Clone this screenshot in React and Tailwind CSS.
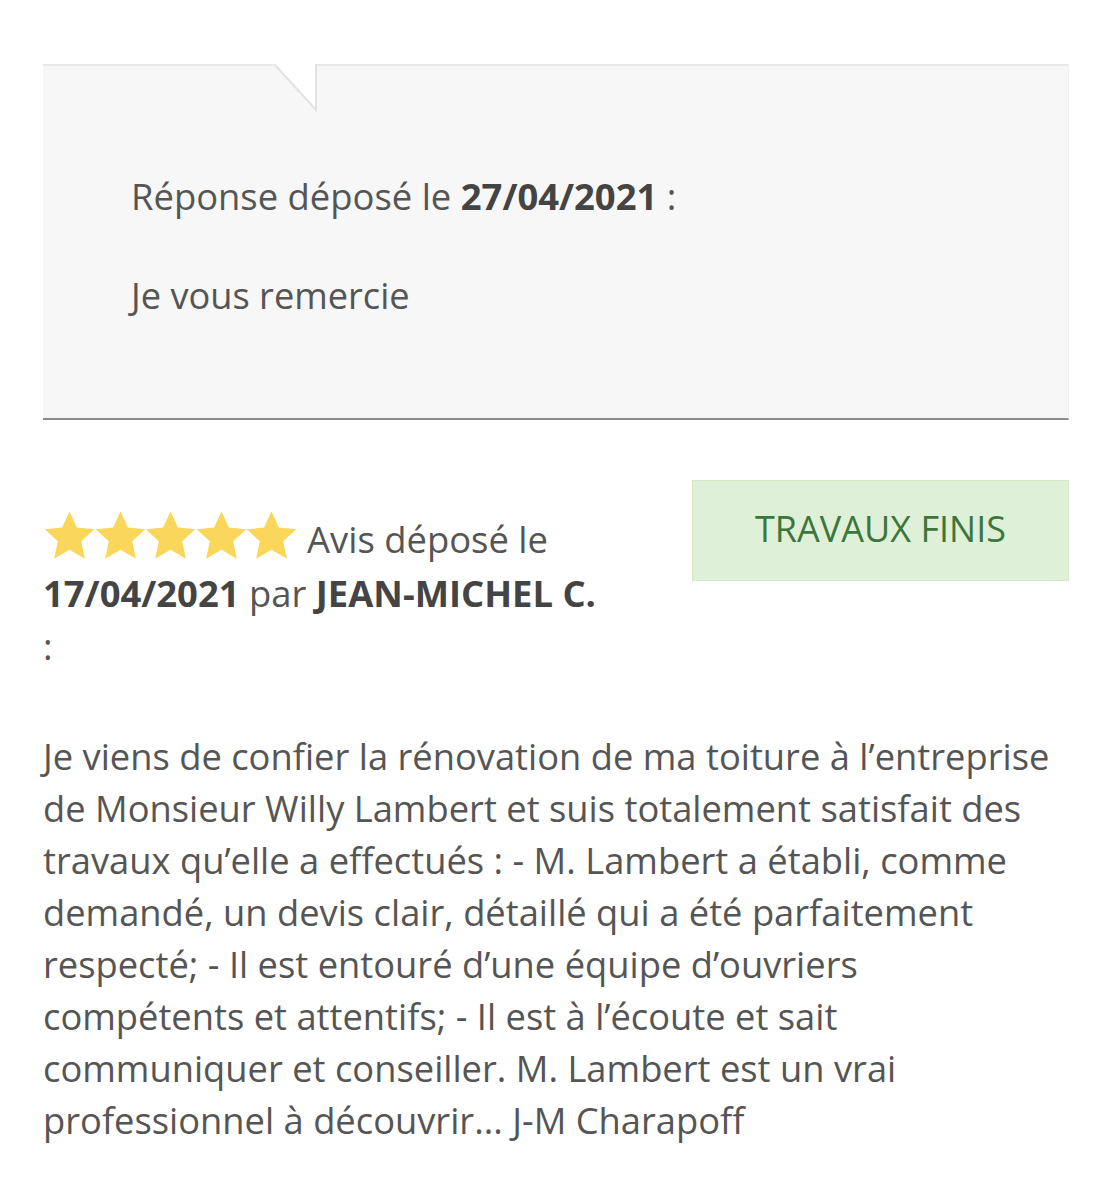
import React from "react";

function Star() {
  return (
    <svg width="51" height="48" viewBox="1.1 1.1 21.8 20.9" className="block -mr-[0.4px]">
      <path
        d="M12 1.2l3.2 7.1 7.6.8-5.7 5.2 1.6 7.6L12 18l-6.7 3.9 1.6-7.6L1.2 9.1l7.6-.8z"
        fill="#fad75a"
      />
    </svg>
  );
}

export default function App() {
  return (
    <div
      className="bg-white min-h-[1200px] px-[43px] pt-[64px] text-[#555]"
      style={{ fontFamily: '"Open Sans", "Noto Sans", sans-serif' }}
    >
      <div className="relative bg-[#f7f7f7] border-t-2 border-t-[#e8e8e8] border-b-2 border-b-[#8c8c8c] border-r border-r-[#f0f0f0] h-[356px] pl-[88px] pt-[104px]">
        <svg
          className="absolute left-[232px] top-[-2px]"
          width="46"
          height="50"
          viewBox="0 0 46 50"
        >
          <polygon points="0,0 42,0 42,46" fill="#ffffff" />
          <polyline points="0,1 41,46 41,0" fill="none" stroke="#e2e2e2" strokeWidth="2" />
        </svg>
        <p className="text-[36.4px] leading-[52px]">
          Réponse déposé le <b className="font-bold text-[#444]">27/04/2021</b> :
        </p>
        <p className="text-[36.2px] leading-[52px] mt-[47px]">Je vous remercie</p>
      </div>

      <div className="flex justify-between items-start mt-[60px]">
        <div className="w-[565px] mt-[31px] text-[36.4px] leading-[53.5px]">
          <span className="inline-flex align-[-6px] mr-[10px] ml-[1px]">
            <Star />
            <Star />
            <Star />
            <Star />
            <Star />
          </span>
          Avis déposé le <b className="font-bold text-[#444]">17/04/2021</b> par{" "}
          <b className="font-bold text-[#444]">JEAN-MICHEL C.</b> :
        </div>
        <div className="w-[377px] h-[101px] pb-[4px] bg-[#dff0d8] border border-[#d6e9c6] text-[#3c763d] flex items-center justify-center text-[36px]">
          TRAVAUX FINIS
        </div>
      </div>

      <p className="mt-[56px] text-[36.3px] leading-[52px]">
        Je viens de confier la rénovation de ma toiture à l’entreprise
        <br />
        de Monsieur Willy Lambert et suis totalement satisfait des
        <br />
        travaux qu’elle a effectués : - M. Lambert a établi, comme
        <br />
        demandé, un devis clair, détaillé qui a été parfaitement
        <br />
        respecté; - Il est entouré d’une équipe d’ouvriers
        <br />
        compétents et attentifs; - Il est à l’écoute et sait
        <br />
        communiquer et conseiller. M. Lambert est un vrai
        <br />
        professionnel à découvrir... J-M Charapoff
      </p>
    </div>
  );
}
